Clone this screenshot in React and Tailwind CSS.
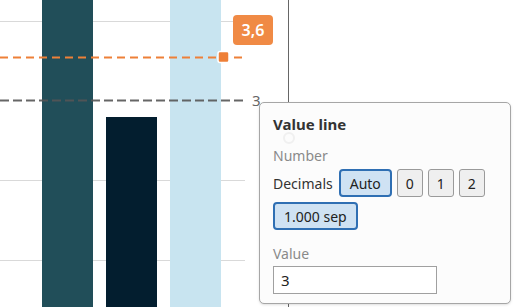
import React from "react";

const bars = [
  { x: 42, top: 0, fill: "#214e59" },
  { x: 106, top: 117, fill: "#031e2f" },
  { x: 170, top: 0, fill: "#c8e4f0" },
];

const gridY = [21, 180, 260];

const ChartArea = () => (
  <svg width="514" height="307" className="absolute inset-0 block">
    {gridY.map((y) => (
      <line key={y} x1="0" x2="245" y1={y + 0.5} y2={y + 0.5} stroke="#d9d9d9" strokeWidth="1" />
    ))}
    {bars.map((b) => (
      <rect key={b.x} x={b.x} y={b.top} width="51" height={307 - b.top} fill={b.fill} />
    ))}
    <line x1="0" x2="245" y1="57.5" y2="57.5" stroke="#ee8038" strokeWidth="2" strokeDasharray="8 5" />
    <line x1="0" x2="245" y1="100.5" y2="100.5" stroke="#555" strokeOpacity="0.9" strokeWidth="2" strokeDasharray="9 4" />
    <rect x="218" y="51.5" width="11" height="11" rx="2" fill="#ee7f37" stroke="#fff" strokeWidth="1.5" />
    <line x1="288.5" x2="288.5" y1="0" y2="307" stroke="#666" strokeWidth="1" />
    <text x="252" y="106" fontSize="15" fill="#666" fontFamily="Noto Sans, sans-serif">3</text>
  </svg>
);

const Chip = ({ children, active }) => (
  <button
    className={`h-[28px] flex items-center justify-center text-[14px] text-[#222] ${
      active
        ? "bg-[#cfe2f3] border-2 border-[#2f6fb3] rounded-[4px] px-[9px]"
        : "bg-[#efefef] border border-[#9a9a9a] rounded-[3px] w-[26px]"
    }`}>
    {children}
  </button>
);

export default function App() {
  return (
    <div className="relative w-[514px] h-[307px] bg-white overflow-hidden" style={{ fontFamily: "'Noto Sans', sans-serif" }}>
      <ChartArea />
      <div className="absolute left-[233px] top-[15px] w-[40px] h-[30px] rounded-[4px] bg-[#f08a45] text-white font-semibold text-[16px] flex items-center justify-center">
        3,6
      </div>
      <div className="absolute left-[259px] top-[102px] w-[252px] h-[202px] rounded-[5px] border border-[#a6a6a6] bg-[#fcfcfc] shadow-sm flex flex-col pl-[13px] pt-[11px]">
        <svg width="14" height="14" className="absolute left-[22px] top-[28px]">
          <circle cx="7" cy="7" r="5" fill="none" stroke="#f0f0f0" strokeWidth="2" />
        </svg>
        <div className="relative h-[20px] leading-[20px] text-[15px] font-bold text-[#333]">Value line</div>
        <div className="mt-[12px] h-[20px] leading-[20px] text-[14px] text-[#8a8a8a]">Number</div>
        <div className="mt-[3px] flex items-center gap-[5px]">
          <span className="text-[14px] text-[#333] mr-[1px]">Decimals</span>
          <Chip active>Auto</Chip>
          <Chip>0</Chip>
          <Chip>1</Chip>
          <Chip>2</Chip>
        </div>
        <div className="mt-[5px] flex">
          <Chip active>1.000 sep</Chip>
        </div>
        <div className="mt-[14px] h-[20px] leading-[20px] text-[14px] text-[#8a8a8a]">Value</div>
        <div className="mt-[2px] w-[164px] h-[28px] border border-[#a0a0a0] bg-white flex items-center px-[7px] text-[15px] text-[#222]">
          3
        </div>
      </div>
    </div>
  );
}
